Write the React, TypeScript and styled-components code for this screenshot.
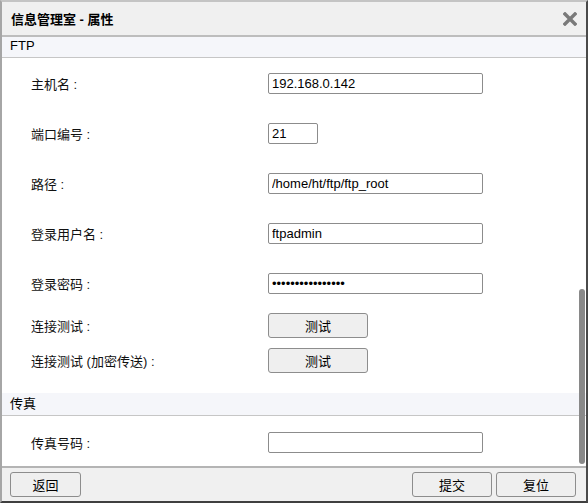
import React, { useLayoutEffect, useRef, useState } from 'react';
import styled, { createGlobalStyle } from 'styled-components';

const GlobalStyle = createGlobalStyle`
  html, body {
    margin: 0;
    padding: 0;
    background: #fff;
  }
  body {
    font-family: "Liberation Sans", "Noto Sans CJK SC", sans-serif;
    font-size: 13px;
    color: #000;
  }
`;

type FieldDef = {
  label: string;
  kind: 'text' | 'password' | 'button';
  value?: string;
  width?: number;
  pad?: number;
};

type SectionDef = {
  title: string;
  fields: FieldDef[];
  padBottom: number;
};

const sections: SectionDef[] = [
  {
    title: '常规',
    padBottom: 14,
    fields: [
      { label: '名称 :', kind: 'text', value: '信息管理室' },
      { label: '描述 :', kind: 'text', value: '' },
      { label: '工作组 :', kind: 'text', value: 'WORKGROUP' },
      { label: '位置 :', kind: 'text', value: '' },
      { label: '联系人 :', kind: 'text', value: '' },
      { label: '电子邮件 :', kind: 'text', value: '' },
    ],
  },
  {
    title: 'SMB',
    padBottom: 0,
    fields: [
      { label: '服务器 :', kind: 'text', value: '' },
      { label: '共享名 :', kind: 'text', value: '' },
      { label: '路径 :', kind: 'text', value: '' },
      { label: '登录用户名 :', kind: 'text', value: '' },
      { label: '登录密码 :', kind: 'password', value: '' },
    ],
  },
  {
    title: 'FTP',
    padBottom: 15,
    fields: [
      { label: '主机名 :', kind: 'text', value: '192.168.0.142' },
      { label: '端口编号 :', kind: 'text', value: '21', width: 50 },
      { label: '路径 :', kind: 'text', value: '/home/ht/ftp/ftp_root' },
      { label: '登录用户名 :', kind: 'text', value: 'ftpadmin' },
      { label: '登录密码 :', kind: 'password', value: '0123456789abcdef' },
      { label: '连接测试 :', kind: 'button', value: '测试' },
      { label: '连接测试 (加密传送) :', kind: 'button', value: '测试' },
    ],
  },
  {
    title: '传真',
    padBottom: 0,
    fields: [{ label: '传真号码 :', kind: 'text', value: '', pad: 16 }],
  },
];

function CloseIcon() {
  return (
    <svg width="14" height="14" viewBox="0 0 14 14">
      <path d="M2 2 L12 12 M12 2 L2 12" stroke="#7a7a7a" strokeWidth="3.4" strokeLinecap="square" />
    </svg>
  );
}

function App() {
  const scrollRef = useRef<HTMLDivElement>(null);
  const [thumb, setThumb] = useState({ top: 0, height: 0 });

  useLayoutEffect(() => {
    const el = scrollRef.current;
    if (!el) return;
    const update = () => {
      const track = el.clientHeight - 4;
      const h = Math.max(20, Math.round((track * el.clientHeight) / el.scrollHeight));
      const range = el.scrollHeight - el.clientHeight;
      const top = range > 0 ? 2 + Math.round((el.scrollTop / range) * (track - h)) : 2;
      setThumb({ top, height: h });
    };
    el.scrollTop = el.scrollHeight;
    update();
    el.addEventListener('scroll', update);
    return () => el.removeEventListener('scroll', update);
  }, []);

  return (
    <>
      <GlobalStyle />
      <Window>
        <TitleBar>
          <Title>信息管理室 - 属性</Title>
          <CloseButton aria-label="关闭">
            <CloseIcon />
          </CloseButton>
        </TitleBar>

        <Body>
          <Scroller ref={scrollRef}>
            {sections.map((s) => (
              <Section key={s.title} $padBottom={s.padBottom}>
                <SectionHeader>{s.title}</SectionHeader>
                {s.fields.map((f, i) => {
                  const isButton = f.kind === 'button';
                  return (
                    <Row
                      key={i}
                      $h={isButton ? 35 : 50}
                      $pad={f.pad ?? (isButton ? 5 : 15)}
                      $ctrl={isButton ? 25 : 21}
                    >
                      <Label>{f.label}</Label>
                      {isButton ? (
                        <Button $w={100}>{f.value}</Button>
                      ) : (
                        <TextInput
                          type={f.kind}
                          defaultValue={f.value}
                          $w={f.width ?? 215}
                        />
                      )}
                    </Row>
                  );
                })}
              </Section>
            ))}
          </Scroller>
          <Thumb style={{ top: thumb.top, height: thumb.height }} />
        </Body>

        <Footer>
          <Button $w={71}>返回</Button>
          <Spacer />
          <Button $w={80}>提交</Button>
          <Button $w={80}>复位</Button>
        </Footer>
      </Window>
    </>
  );
}

export default App;

const Window = styled.div`
  width: 588px;
  height: 503px;
  box-sizing: border-box;
  border-style: solid;
  border-width: 2px;
  border-color: #c4c4c4 #4a4a4a #3f3f3f #a6a6a6;
  display: flex;
  flex-direction: column;
  background: #fff;
`;

const TitleBar = styled.div`
  height: 33px;
  flex: none;
  background: #f0f0f0;
  border-bottom: 2px solid #bdbdbd;
  display: flex;
  align-items: center;
  justify-content: space-between;
  padding: 0 9px 0 9px;
`;

const Title = styled.span`
  font-weight: bold;
  font-size: 13px;
`;

const CloseButton = styled.span`
  display: flex;
  width: 14px;
  height: 14px;
  cursor: pointer;
`;

const Body = styled.div`
  flex: 1;
  min-height: 0;
  position: relative;
`;

const Scroller = styled.div`
  height: 100%;
  overflow-y: auto;
  scrollbar-width: none;

  &::-webkit-scrollbar {
    display: none;
  }
`;

const Thumb = styled.div`
  position: absolute;
  right: 1px;
  width: 6px;
  border-radius: 3px;
  background: #898989;
`;

const Section = styled.div<{ $padBottom: number }>`
  padding-bottom: ${(p) => p.$padBottom}px;

  & + & > div:first-child {
    border-top: 1px solid #c6c6c6;
  }
`;

const SectionHeader = styled.div`
  height: 22px;
  line-height: 22px;
  padding-left: 8px;
  background: #f5f6fa;
  border-bottom: 1px solid #c6c6c6;
`;

const Row = styled.div<{ $h: number; $pad: number; $ctrl: number }>`
  display: grid;
  grid-template-columns: 237px auto;
  grid-template-rows: ${(p) => p.$ctrl}px;
  align-items: center;
  box-sizing: border-box;
  height: ${(p) => p.$h}px;
  padding: ${(p) => p.$pad}px 0 0 29px;
`;

const Label = styled.span`
  color: #111;
  white-space: nowrap;
`;

const TextInput = styled.input<{ $w: number }>`
  width: ${(p) => p.$w}px;
  height: 21px;
  box-sizing: border-box;
  border: 1px solid #8c8c8c;
  border-radius: 2px;
  padding: 0 3px;
  margin: 0;
  font-family: "Liberation Sans", "Noto Sans CJK SC", sans-serif;
  font-size: 13px;
  color: #000;
  background: #fff;
  outline: none;
`;

const Button = styled.button<{ $w: number }>`
  width: ${(p) => p.$w}px;
  height: 25px;
  box-sizing: border-box;
  margin: 0;
  padding: 0;
  background: #efefef;
  border: 1px solid #8d8d8d;
  border-radius: 3px;
  font-family: "Liberation Sans", "Noto Sans CJK SC", sans-serif;
  font-size: 13px;
  color: #000;
  cursor: pointer;
`;

const Footer = styled.div`
  height: 33px;
  flex: none;
  background: #f0f0f0;
  border-top: 2px solid #b4b4b4;
  display: flex;
  align-items: center;
  gap: 4px;
  padding: 0 10px 0 8px;
`;

const Spacer = styled.div`
  margin-left: auto;
`;
